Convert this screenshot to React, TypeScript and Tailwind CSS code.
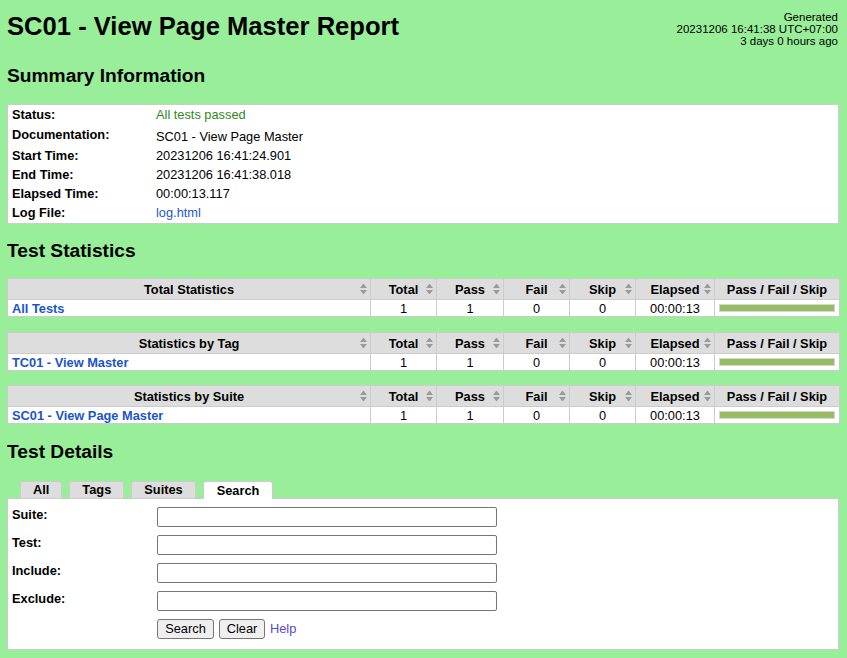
const SortIcon = () => (
  <svg
    width="7"
    height="11"
    viewBox="0 0 7 11"
    fill="#9a9a9a"
    className="absolute right-[3px] top-1/2 -translate-y-1/2"
  >
    <path d="M0 4.5L3.5 0L7 4.5Z M0 6.5L3.5 11L7 6.5Z" />
  </svg>
)

const summary = [
  { label: 'Status:', value: <span className="text-[#2f8a22]">All tests passed</span> },
  { label: 'Documentation:', value: 'SC01 - View Page Master', doc: true },
  { label: 'Start Time:', value: '20231206 16:41:24.901' },
  { label: 'End Time:', value: '20231206 16:41:38.018' },
  { label: 'Elapsed Time:', value: '00:00:13.117' },
  { label: 'Log File:', value: <a className="text-[#2457c9]">log.html</a> },
]

const StatTable = ({ title, name, className }: { title: string; name: string; className?: string }) => (
  <table className={`w-full table-fixed border-collapse bg-white ${className ?? ''}`}>
    <colgroup>
      <col className="w-[363px]" />
      <col className="w-[66px]" />
      <col className="w-[67px]" />
      <col className="w-[66px]" />
      <col className="w-[66px]" />
      <col className="w-[79px]" />
      <col className="w-[125px]" />
    </colgroup>
    <thead>
      <tr className="bg-[#dddddd]">
        {[title, 'Total', 'Pass', 'Fail', 'Skip', 'Elapsed'].map((h) => (
          <th key={h} className="relative h-[21px] border border-[#cccccc] p-0 text-center font-bold leading-[17px]">
            {h}
            <SortIcon />
          </th>
        ))}
        <th className="h-[21px] border border-[#cccccc] p-0 text-center font-bold leading-[17px]">Pass / Fail / Skip</th>
      </tr>
    </thead>
    <tbody>
      <tr>
        <td className="h-[17px] border border-[#cccccc] px-[4px] py-0 font-bold leading-[15px]">
          <a className="text-[#1a55cc]">{name}</a>
        </td>
        {['1', '1', '0', '0', '00:00:13'].map((v, i) => (
          <td key={i} className="h-[17px] border border-[#cccccc] p-0 text-center leading-[15px]">
            {v}
          </td>
        ))}
        <td className="h-[17px] border border-[#cccccc] px-[4px] py-0">
          <div className="h-[8px] border border-[#d6d6d6] bg-[#97bd61]" />
        </td>
      </tr>
    </tbody>
  </table>
)

const fields = ['Suite:', 'Test:', 'Include:', 'Exclude:']

export default function App() {
  return (
    <div className="min-h-screen bg-[#99ee99] pl-[7px] pr-[8px] pb-[10px] font-[Liberation_Sans,Arial,sans-serif] text-[12.8px] text-black">
      {/* header */}
      <div className="flex items-start justify-between pt-[11px]">
        <h1 className="mt-[1px] text-[25.6px] font-bold leading-[29px]">SC01 - View Page Master Report</h1>
        <div className="pr-[1px] text-right text-[11.5px] leading-[12px]">
          <div>Generated</div>
          <div>20231206 16:41:38 UTC+07:00</div>
          <div>3 days 0 hours ago</div>
        </div>
      </div>

      <h2 className="mt-[18px] text-[19.2px] font-bold leading-[22px]">Summary Information</h2>
      <div className="mt-[17px] border border-[#cccccc] bg-white pb-[1px]">
        {summary.map((r) => (
          <div key={r.label} className={`flex pl-[4px] ${r.doc ? 'h-[22px]' : 'h-[19px] items-center'}`}>
            <div className={`w-[144px] font-bold leading-[15px] ${r.doc ? 'pt-[3px]' : ''}`}>{r.label}</div>
            <div className={`leading-[15px] ${r.doc ? 'pt-[5px]' : ''}`}>{r.value}</div>
          </div>
        ))}
      </div>

      <h2 className="mt-[16px] text-[19.2px] font-bold leading-[22px]">Test Statistics</h2>
      <StatTable className="mt-[16px]" title="Total Statistics" name="All Tests" />
      <StatTable className="mt-[15px]" title="Statistics by Tag" name="TC01 - View Master" />
      <StatTable className="mt-[14px]" title="Statistics by Suite" name="SC01 - View Page Master" />

      <h2 className="mt-[17px] text-[19.2px] font-bold leading-[22px]">Test Details</h2>
      <div className="mt-[18px] flex items-end gap-[7px] pl-[13px]">
        {['All', 'Tags', 'Suites'].map((t) => (
          <div
            key={t}
            className="h-[17px] rounded-t-[3px] border border-b-0 border-[#cccccc] bg-[#dddddd] px-[12px] font-bold leading-[16px]"
          >
            {t}
          </div>
        ))}
        <div className="relative -mb-px h-[18px] rounded-t-[3px] border border-b-0 border-[#cccccc] bg-white px-[13px] font-bold leading-[18px]">
          Search
        </div>
      </div>
      <div className="border border-[#cccccc] bg-white pl-[4px] pt-[8px] pb-[10px]">
        {fields.map((f) => (
          <div key={f} className="flex h-[28px] items-start">
            <div className="w-[145px] font-bold leading-[16px]">{f}</div>
            <input className="h-[20px] w-[340px] rounded-[2px] border border-[#767676] bg-white px-[2px] outline-none" />
          </div>
        ))}
        <div className="flex h-[20px] items-center pl-[145px]">
          <button className="h-[20px] w-[57px] rounded-[3px] border border-[#767676] bg-[#efefef] text-center leading-[18px]">
            Search
          </button>
          <button className="ml-[5px] h-[20px] w-[46px] rounded-[3px] border border-[#767676] bg-[#efefef] text-center leading-[18px]">
            Clear
          </button>
          <a className="ml-[5px] text-[#5a48d6]">Help</a>
        </div>
      </div>
    </div>
  )
}
